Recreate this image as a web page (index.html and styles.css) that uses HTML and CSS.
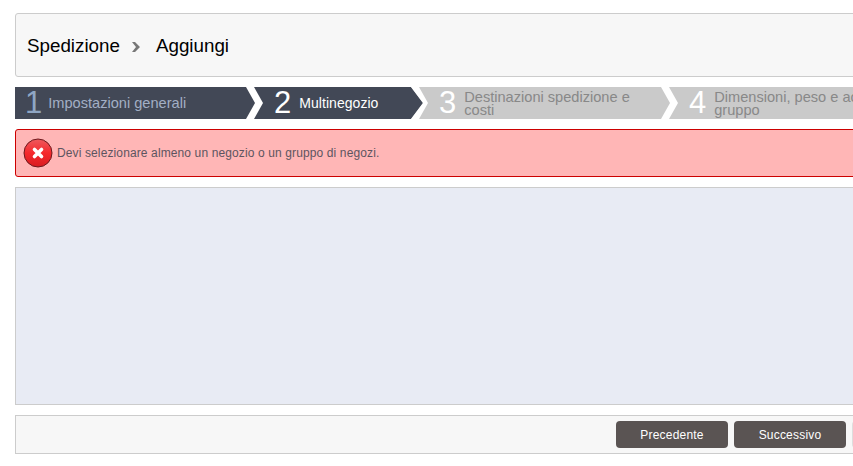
FILE: index.html
```html
<!DOCTYPE html>
<html lang="it">
  <head>
    <meta charset="UTF-8" />
    <title>Spedizione</title>
    <link rel="stylesheet" href="styles.css">
  </head>
  <body>
    <div id="wrap">
      <div class="title-bar">
        <span>Spedizione</span>
        <svg class="title-sep" width="10" height="12" viewBox="0 0 10 12"><polygon points="1,1 4,1 9,6 4,11 1,11 5,6" fill="#777" /></svg>
        <span>Aggiungi</span>
      </div>

      <ul class="steps">
        <li class="step step-1 on">
          <b>1</b>
          <span>Impostazioni generali</span>
        </li>
        <li class="step step-2 on current">
          <svg class="arrow" width="18" height="32" viewBox="0 0 18 32"><polygon points="0,0 9,16 0,32" fill="#424856" /><polygon points="0,0 8,0 17,16 8,32 0,32 9,16" fill="#fff" /></svg>
          <b>2</b>
          <span>Multinegozio</span>
        </li>
        <li class="step step-3">
          <svg class="arrow" width="18" height="32" viewBox="0 0 18 32"><polygon points="0,0 12,16 0,32" fill="#424856" /><polygon points="0,0 8,0 17,16 8,32 0,32 12,16" fill="#fff" /></svg>
          <b>3</b>
          <span>Destinazioni spedizione e costi</span>
        </li>
        <li class="step step-4">
          <svg class="arrow" width="18" height="32" viewBox="0 0 18 32"><polygon points="0,0 9,16 0,32" fill="#cacaca" /><polygon points="0,0 8,0 17,16 8,32 0,32 9,16" fill="#fff" /></svg>
          <b>4</b>
          <span>Dimensioni, peso e accessori del gruppo</span>
        </li>
      </ul>

      <div class="alert">
        <svg class="alert-icon" width="30" height="30" viewBox="0 0 30 30">
          <defs>
            <linearGradient id="red" x1="0" y1="0" x2="0" y2="1">
              <stop offset="0" stop-color="#ee5a5e" />
              <stop offset="0.5" stop-color="#f5292c" />
              <stop offset="1" stop-color="#d81b20" />
            </linearGradient>
          </defs>
          <circle cx="15" cy="15" r="14" fill="url(#red)" stroke="#6b1a1e" stroke-width="1" />
          <path d="M11.5 11.5 L18.5 18.5 M18.5 11.5 L11.5 18.5" stroke="#fff" stroke-width="3.6" stroke-linecap="round" />
        </svg>
        <span>Devi selezionare almeno un negozio o un gruppo di negozi.</span>
      </div>

      <div class="panel"></div>

      <div class="footer">
        <button>Precedente</button>
        <button>Successivo</button>
        <button class="btn-off"></button>
      </div>
    </div>
  </body>
</html>
```

FILE: styles.css
```css
* {
  box-sizing: border-box;
}
html,
body,
ul,
li {
  padding: 0;
  margin: 0;
  list-style: none;
}
html,
body {
  overflow: hidden;
  background: #fff;
}
body {
  font-family: "Liberation Sans", Arial, sans-serif;
}
#wrap {
  width: 900px;
  margin: 13px 0 0 15px;
  display: flex;
  flex-direction: column;
  gap: 10px;
}
.title-bar {
  display: flex;
  align-items: center;
  height: 64px;
  padding: 2px 11px 0;
  font-size: 18.8px;
  color: #000;
  background: #f7f7f7;
  border: 1px solid #ccc;
  border-radius: 3px;
}
.title-sep {
  margin: 2px 15px 0 11px;
}
.steps {
  display: flex;
  height: 32px;
}
.step {
  position: relative;
  display: flex;
  align-items: center;
  height: 32px;
  background: #cacaca;
  color: #888;
}
.step.on {
  background: #424856;
  color: #a3afc5;
}
.step b {
  font-weight: normal;
  font-size: 31px;
  line-height: 32px;
  color: #fff;
}
.step span {
  font-size: 14.6px;
  line-height: 13px;
}
.step .arrow {
  position: absolute;
  left: 0;
  top: 0;
}
.step-1 {
  width: 231px;
  padding-left: 10px;
}
.step-1 b {
  color: #8fa6c4;
  margin-right: 6px;
}
.step-2 {
  width: 165px;
  padding-left: 28px;
}
.step-2 b {
  margin-right: 8px;
}
.step-2 span {
  color: #fff;
  font-size: 14px;
  letter-spacing: 0.05px;
}
.step-3 {
  width: 250px;
  padding-left: 28px;
}
.step-3 b,
.step-4 b {
  margin-right: 8px;
}
.step-3 span {
  width: 190px;
  margin-top: 2px;
}
.step-4 {
  width: 254px;
  padding-left: 28px;
}
.step-4 span {
  flex: none;
  width: 220px;
  margin-top: 2px;
}
.alert {
  display: flex;
  align-items: center;
  height: 48px;
  padding: 0 0 0 7px;
  font-size: 12px;
  letter-spacing: 0.12px;
  color: #5d5560;
  background: #ffb6b6;
  border: 1px solid #c00;
  border-radius: 3px;
}
.alert-icon {
  margin-right: 4px;
}
.panel {
  height: 218px;
  background: #e8ebf4;
  border: 1px solid #ccc;
}
.footer {
  display: flex;
  justify-content: flex-end;
  gap: 6px;
  height: 39px;
  padding: 5px 7px 0 0;
  background: #f7f7f7;
  border: 1px solid #ccc;
}
.footer button {
  width: 112px;
  height: 27px;
  padding: 0;
  font-family: inherit;
  font-size: 12px;
  letter-spacing: 0.2px;
  color: #fff;
  background: #5a5453;
  border: 0;
  border-radius: 4px;
}
.footer .btn-off {
  width: 55px;
  background: #ddd;
}
```
